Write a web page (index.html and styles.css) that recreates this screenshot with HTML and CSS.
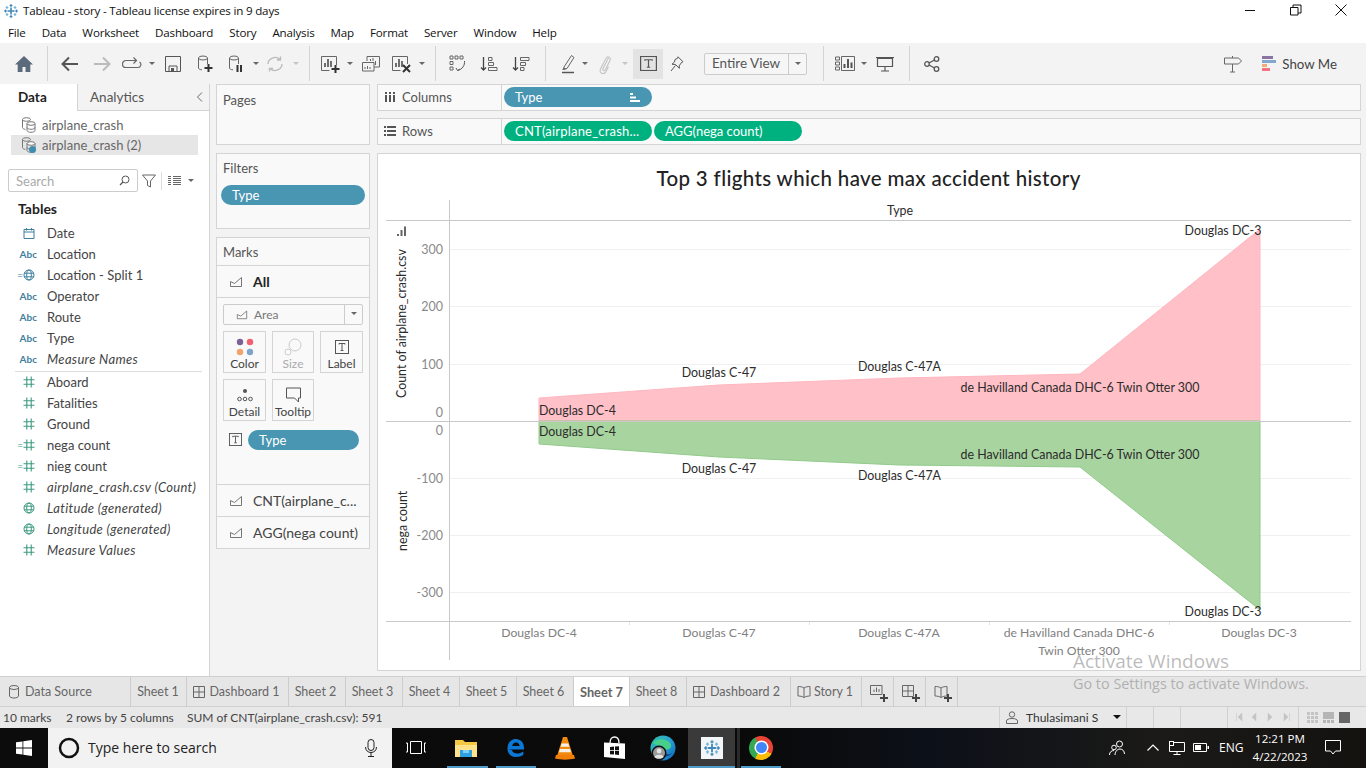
FILE: index.html
```html
<!DOCTYPE html>
<html lang="en">
<head>
<meta charset="utf-8">
<title>Tableau - story</title>
<link rel="stylesheet" href="styles.css">
</head>
<body>
<svg class="defs" width="0" height="0" aria-hidden="true">
  <defs>
    <symbol id="i-logo" viewBox="0 0 16 16">
      <g stroke="#3f88b8" stroke-width="1.2" fill="none">
        <path d="M8 4.500v7M4.500 8h7" stroke-width="1.600"/>
        <path d="M8 1v3M6.600 2.500h2.800M8 12v3M6.600 13.500h2.800M2.500 6.500v3M1 8h3M13.500 6.500v3M12 8h3"/>
        <path d="M4 3v3M2.600 4.500h2.800M12 3v3M10.600 4.500h2.800M4 10v3M2.600 11.500h2.800M12 10v3M10.600 11.500h2.800" stroke="#79b3d3"/>
      </g>
    </symbol>
    <symbol id="i-area" viewBox="0 0 14 14">
      <path d="M1.500 12.500V7.500l4 2 7-6v9z" fill="none" stroke="#777" stroke-width="1"/>
    </symbol>
    <symbol id="i-tbox" viewBox="0 0 14 14">
      <rect x=".5" y=".5" width="13" height="13" fill="none" stroke="#555"/>
      <path d="M4 4.500V3.500h6v1M7 3.500v7M5.600 10.500h2.800" fill="none" stroke="#555"/>
    </symbol>
    <symbol id="i-hash" viewBox="0 0 12 12">
      <path d="M3.800 .5v11M8.200 .5v11M.5 3.800h11M.5 8.200h11" fill="none" stroke="#3d9b80" stroke-width="1.100"/>
    </symbol>
    <symbol id="i-globe" viewBox="0 0 12 12">
      <circle cx="6" cy="6" r="5" fill="none" stroke="currentColor"/>
      <ellipse cx="6" cy="6" rx="2.300" ry="5" fill="none" stroke="currentColor"/>
      <path d="M1 4.200h10M1 7.800h10" stroke="currentColor"/>
    </symbol>
    <symbol id="i-linked" viewBox="0 0 18 18">
      <ellipse cx="6.500" cy="3.500" rx="4" ry="1.800" fill="none" stroke="#777"/>
      <path d="M2.500 3.500v8c0 1 1.500 1.800 3 1.800" fill="none" stroke="#777"/>
      <ellipse cx="11" cy="7.500" rx="4" ry="1.800" fill="#fff" stroke="#777"/>
      <path d="M7 7.500v7c0 1 2 1.800 4 1.800s4-.8 4-1.800v-7M7 11.500c0 1 2 1.800 4 1.800s4-.8 4-1.800" fill="none" stroke="#777"/>
    </symbol>
    <symbol id="i-dash" viewBox="0 0 12 12">
      <path d="M.5 .5h11v11H.500zM6 .5v11M.5 6h11" fill="none" stroke="#666"/>
    </symbol>
    <symbol id="i-story" viewBox="0 0 14 14">
      <path d="M7 3C5.500 1.800 3 1.500 1 1.500v9.500c2 0 4.500.4 6 1.500 1.500-1.100 4-1.500 6-1.500V1.500C11 1.500 8.500 1.800 7 3zM7 3v9.500" fill="none" stroke="#666"/>
    </symbol>
    <symbol id="i-plus" viewBox="0 0 8 8">
      <path d="M4 0v8M0 4h8" stroke="#444" stroke-width="2"/>
    </symbol>
  </defs>
</svg>

<div class="app">
  <header class="titlebar">
    <svg class="title-logo" width="16" height="16"><use href="#i-logo"/></svg>
    <span class="title-text">Tableau - story - Tableau license expires in 9 days</span>
    <div class="winctl">
      <svg width="12" height="12" viewBox="0 0 12 12"><path d="M1 6.500h10" stroke="#111"/></svg>
      <svg width="12" height="12" viewBox="0 0 12 12"><path d="M.5 3.500h7.500v7.500H.500zM3 3.500V1h8v8H8" fill="none" stroke="#111"/></svg>
      <svg width="12" height="12" viewBox="0 0 12 12"><path d="M.5 .5l11 11M11.500 .5l-11 11" stroke="#111"/></svg>
    </div>
  </header>

  <nav class="menubar">
    <span>File</span><span>Data</span><span>Worksheet</span><span>Dashboard</span><span>Story</span><span>Analysis</span><span>Map</span><span>Format</span><span>Server</span><span>Window</span><span>Help</span>
  </nav>

  <div class="toolbar">
    <div class="tb w32"><svg width="20" height="18" viewBox="0 0 20 18"><path d="M10 1L1 9.500h2.700V17h4.800v-5h3v5h4.800V9.500H19z" fill="#5b6b7b"/></svg></div>
    <i class="sep ml7"></i>
    <div class="tb w32 ml6"><svg width="18" height="16" viewBox="0 0 18 16"><path d="M17 8H2M8 1.500L1.500 8 8 14.500" fill="none" stroke="#555" stroke-width="2"/></svg></div>
    <div class="tb w32"><svg width="18" height="16" viewBox="0 0 18 16"><path d="M1 8h15M10 1.500L16.500 8 10 14.500" fill="none" stroke="#bbb" stroke-width="2"/></svg></div>
    <div class="tb w28"><svg width="20" height="14" viewBox="0 0 20 14"><path d="M14 3.500H4a3.200 3.200 0 000 7h12a3 3 0 001.500-5.500M11.500.500l3 3-3 3" fill="none" stroke="#666" stroke-width="1.200"/></svg></div>
    <i class="caret w12"></i>
    <div class="tb w30"><svg width="16" height="16" viewBox="0 0 16 16"><path d="M.5.500h15v15H.500zM4 15.500V10h8v5.500" fill="none" stroke="#555"/><rect x="6" y="12" width="3" height="3" fill="#555"/></svg></div>
    <div class="tb w34"><svg width="16" height="18" viewBox="0 0 16 18"><ellipse cx="6" cy="3" rx="4.500" ry="2" fill="none" stroke="#666"/><path d="M1.500 3v10c0 1 1.500 1.800 3.500 1.800M10.500 3v6" fill="none" stroke="#666"/><path d="M11.500 9v8M7.500 13h8" stroke="#333" stroke-width="2"/></svg></div>
    <div class="tb w28"><svg width="16" height="18" viewBox="0 0 16 18"><ellipse cx="6" cy="3" rx="4.500" ry="2" fill="none" stroke="#666"/><path d="M1.500 3v10c0 1 1.500 1.800 3.500 1.800M10.500 3v6" fill="none" stroke="#666"/><path d="M9.500 10v7M13 10v7" stroke="#333" stroke-width="2"/></svg></div>
    <i class="caret w12"></i>
    <div class="tb w26"><svg width="18" height="16" viewBox="0 0 18 16"><path d="M2 8a7 6.500 0 0112-4.500M16 8A7 6.500 0 014 12.500M14.500.500v3.500H11M3.500 15.500V12.500H7" fill="none" stroke="#bbb" stroke-width="1.300"/></svg></div>
    <i class="caret w16 off"></i>
    <i class="sep ml5"></i>
    <div class="tb w32 ml5"><svg width="20" height="18" viewBox="0 0 20 18"><path d="M15.500 10V1.500H.500v14h8" fill="none" stroke="#666"/><path d="M4 12V8M7 12V4M10 12V6" stroke="#444" stroke-width="1.500"/><path d="M14.500 10v8M10.500 14h8" stroke="#333" stroke-width="2"/></svg></div>
    <i class="caret w6"></i>
    <div class="tb w36"><svg width="18" height="16" viewBox="0 0 18 16"><path d="M5 5V.5h12.500V11H12" fill="none" stroke="#666"/><path d="M.5 6.500H12V15H.500z" fill="#f3f3f3" stroke="#666"/><path d="M8.500 5V3M11 5V2M13.500 9V5M3 13v-2M5.500 13v-3M8 13v-2" stroke="#666"/></svg></div>
    <div class="tb w26"><svg width="20" height="18" viewBox="0 0 20 18"><path d="M15.500 9V1.500H.500v14h8" fill="none" stroke="#666"/><path d="M4 12V8M7 12V4M10 12V6" stroke="#444" stroke-width="1.500"/><path d="M11 10l7 7M18 10l-7 7" stroke="#333" stroke-width="2"/></svg></div>
    <i class="caret w14"></i>
    <i class="sep ml6"></i>
    <div class="tb w32 ml5"><svg width="18" height="18" viewBox="0 0 18 18"><path d="M2 1h3v3H2zM7 1h3v3H7zM12 1h3v3h-3zM2 6.500h3v3H2zM2 12h3v3H2z" fill="none" stroke="#666"/><path d="M16.500 6c.5 4-2 8.500-7 9.500M8 13l1.500 2.500L12 14" fill="none" stroke="#555"/></svg></div>
    <div class="tb w32"><svg width="18" height="16" viewBox="0 0 18 16"><path d="M3.500 1v13M1 11.500L3.500 14 6 11.500" fill="none" stroke="#444" stroke-width="1.300"/><path d="M8.500 1.500H12v3H8.500zM8.500 6.500h5v3h-5zM8.500 11.500H17v3H8.500z" fill="none" stroke="#666"/></svg></div>
    <div class="tb w32"><svg width="18" height="16" viewBox="0 0 18 16"><path d="M3.500 1v13M1 11.500L3.500 14 6 11.500" fill="none" stroke="#444" stroke-width="1.300"/><path d="M8.500 1.500H17v3H8.500zM8.500 6.500h5v3h-5zM8.500 11.500H12v3H8.500z" fill="none" stroke="#666"/></svg></div>
    <i class="sep ml8"></i>
    <div class="tb w28 ml8"><svg width="14" height="20" viewBox="0 0 14 20"><path d="M3 13L10.500 1.500 13 3.500 6 14.500 2.500 15.500z" fill="none" stroke="#666"/><path d="M1 16l2-2.500 2.500 1.500" fill="#666"/><path d="M1 18.500h12" stroke="#555" stroke-width="1.500"/></svg></div>
    <i class="caret w6"></i>
    <div class="tb w32 ml1"><svg width="12" height="20" viewBox="0 0 12 20"><path d="M9.500 4L4 14.500c-1 2 1.500 3 2.500 1L11 6.500c1.500-3-2.500-5-4-2L1.500 15c-2 4 3.500 6.500 5.500 2.500L9.500 12.500" fill="none" stroke="#c4c4c4" stroke-width="1.100"/></svg></div>
    <i class="caret w8 off"></i>
    <div class="tb tbon ml4"><svg width="17" height="15" viewBox="0 0 14 14" preserveAspectRatio="none"><use href="#i-tbox"/></svg></div>
    <div class="tb w28"><svg width="14" height="16" viewBox="0 0 14 16"><path d="M8 .8l5 5-1.300.5-2.500 3.500.2 2.500L5.500 8.500 2 8.200 4.500 6 5 3.500 7.500 2.300zM5.500 9.500L1 15" fill="none" stroke="#555"/></svg></div>
    <div class="fit ml13"><span class="fit-l">Entire View</span><span class="fit-r"><i class="caret w6"></i></span></div>
    <i class="sep ml16"></i>
    <div class="tb w32 ml5"><svg width="20" height="15" viewBox="0 0 20 15"><path d="M.5 1h4v3h-4zM.5 6h4v3h-4zM.5 11h4v3h-4zM6.500.5h13v14h-13z" fill="none" stroke="#666"/><path d="M9.500 12V8M13 12V3M16.500 12V6.500" stroke="#555" stroke-width="2"/></svg></div>
    <i class="caret w6"></i>
    <div class="tb w36"><svg width="18" height="16" viewBox="0 0 18 16"><path d="M1.500 2.500h15v8h-15zM0 1.500h18M9 10.500v4M5 15h8" fill="none" stroke="#555" stroke-width="1.200"/></svg></div>
    <i class="sep ml6"></i>
    <div class="tb w32 ml6"><svg width="16" height="16" viewBox="0 0 16 16"><g fill="none" stroke="#555" stroke-width="1.300"><circle cx="3" cy="8" r="2.300"/><circle cx="12.500" cy="3" r="2.300"/><circle cx="12.500" cy="13" r="2.300"/><path d="M5 7l5.500-3M5 9l5.500 3"/></g></svg></div>
    <div class="tb-spacer"></div>
    <div class="tb w32"><svg width="18" height="18" viewBox="0 0 18 18"><path d="M.5 3h14l3 3-3 3H.500zM8.500 3V1M8.500 9v8M6 17h5" fill="none" stroke="#666"/></svg></div>
    <div class="showme">
      <svg width="14" height="16" viewBox="0 0 14 16"><rect x="0" y="0" width="11" height="3" fill="#8a75a2"/><rect x="0" y="4" width="14" height="3" fill="#82a8d0"/><rect x="0" y="8" width="5" height="3" fill="#f2aa76"/><rect x="0" y="12" width="8" height="3" fill="#f4727f"/></svg>
      <span>Show Me</span>
    </div>
  </div>

  <main class="workspace">
    <aside class="datapane">
      <div class="dp-tabs">
        <div class="dp-tab dp-on">Data</div>
        <div class="dp-tab dp-off">Analytics<svg class="dp-collapse" width="7" height="10" viewBox="0 0 7 10"><path d="M6 .5L1.500 5 6 9.500" fill="none" stroke="#666"/></svg></div>
      </div>
      <div class="ds-row"><svg width="18" height="18"><use href="#i-linked"/></svg><span>airplane_crash</span></div>
      <div class="ds-row ds-sel"><span class="ds-ico"><svg width="18" height="18"><use href="#i-linked"/></svg><i class="ds-check"></i></span><span>airplane_crash (2)</span></div>
      <div class="searchrow">
        <div class="search"><span>Search</span><svg width="11" height="11" viewBox="0 0 11 11"><circle cx="6.500" cy="4.500" r="3.500" fill="none" stroke="#555"/><path d="M4 7L1 10" stroke="#555" stroke-width="1.300"/></svg></div>
        <svg class="funnel" width="14" height="14" viewBox="0 0 14 14"><path d="M.5 1h13L8.500 7v6l-3-1.500V7z" fill="none" stroke="#666"/></svg>
        <i class="vsep"></i>
        <svg class="listic" width="13" height="9" viewBox="0 0 13 9"><path d="M0 .5h3M5 .5h8M0 2.500h3M5 2.500h8M0 4.500h3M5 4.500h8M0 6.500h3M5 6.500h8M0 8.500h3M5 8.500h8" stroke="#666"/></svg>
        <i class="caret w20"></i>
      </div>
      <div class="tables-h">Tables</div>
      <ul class="fields">
        <li><span class="fi"><svg width="12" height="12" viewBox="0 0 12 12"><path d="M1 2.500h10v9H1zM1 5h10M3.500 1v2.500M8.500 1v2.500" fill="none" stroke="#3f7f9c"/></svg></span>Date</li>
        <li><span class="fi abc">Abc</span>Location</li>
        <li><span class="fi"><b class="calc calc-b">=</b><svg class="gl-b" width="12" height="12"><use href="#i-globe"/></svg></span>Location - Split 1</li>
        <li><span class="fi abc">Abc</span>Operator</li>
        <li><span class="fi abc">Abc</span>Route</li>
        <li><span class="fi abc">Abc</span>Type</li>
        <li class="it"><span class="fi abc">Abc</span>Measure Names</li>
        <li class="fsep"></li>
        <li><span class="fi"><svg width="12" height="12"><use href="#i-hash"/></svg></span>Aboard</li>
        <li><span class="fi"><svg width="12" height="12"><use href="#i-hash"/></svg></span>Fatalities</li>
        <li><span class="fi"><svg width="12" height="12"><use href="#i-hash"/></svg></span>Ground</li>
        <li><span class="fi"><b class="calc">=</b><svg width="12" height="12"><use href="#i-hash"/></svg></span>nega count</li>
        <li><span class="fi"><b class="calc">=</b><svg width="12" height="12"><use href="#i-hash"/></svg></span>nieg count</li>
        <li class="it"><span class="fi"><svg width="12" height="12"><use href="#i-hash"/></svg></span>airplane_crash.csv (Count)</li>
        <li class="it"><span class="fi"><svg class="gl-g" width="12" height="12"><use href="#i-globe"/></svg></span>Latitude (generated)</li>
        <li class="it"><span class="fi"><svg class="gl-g" width="12" height="12"><use href="#i-globe"/></svg></span>Longitude (generated)</li>
        <li class="it"><span class="fi"><svg width="12" height="12"><use href="#i-hash"/></svg></span>Measure Values</li>
      </ul>
    </aside>

    <section class="cards">
      <div class="card pages"><div class="card-h">Pages</div></div>
      <div class="card filters"><div class="card-h">Filters</div><div class="pill blue flt">Type</div></div>
      <div class="card marks">
        <div class="card-h marks-h">Marks</div>
        <div class="mrow mrow-all"><svg width="14" height="14"><use href="#i-area"/></svg><b>All</b></div>
        <div class="marks-body">
          <div class="mdrop"><span class="mdrop-l"><svg width="12" height="12"><use href="#i-area"/></svg>Area</span><span class="mdrop-r"><i class="caret w6"></i></span></div>
          <div class="mgrid">
            <div class="mbtn"><svg width="18" height="18" viewBox="0 0 18 18"><circle cx="4" cy="4" r="3.200" fill="#7b6295"/><circle cx="14" cy="4" r="3.200" fill="#f0606e"/><circle cx="4" cy="14" r="3.200" fill="#f2a36d"/><circle cx="14" cy="14" r="3.200" fill="#7ea3cc"/></svg><span>Color</span></div>
            <div class="mbtn off"><svg width="18" height="18" viewBox="0 0 18 18"><circle cx="11" cy="7" r="6" fill="none" stroke="#ccc"/><circle cx="4" cy="14" r="3" fill="#fafafa" stroke="#ccc"/></svg><span>Size</span></div>
            <div class="mbtn"><svg width="14" height="14"><use href="#i-tbox"/></svg><span>Label</span></div>
            <div class="mbtn"><svg width="16" height="14" viewBox="0 0 16 14"><circle cx="8" cy="3" r="2" fill="#555"/><circle cx="2.500" cy="11" r="1.800" fill="none" stroke="#555"/><circle cx="8" cy="11" r="1.800" fill="none" stroke="#555"/><circle cx="13.500" cy="11" r="1.800" fill="none" stroke="#555"/></svg><span>Detail</span></div>
            <div class="mbtn"><svg width="15" height="15" viewBox="0 0 15 15"><path d="M.5.500h14v10h-2v4l-4-4H.500z" fill="none" stroke="#555"/></svg><span>Tooltip</span></div>
          </div>
          <div class="mfield"><svg width="13" height="13"><use href="#i-tbox"/></svg><div class="pill blue mpill">Type</div></div>
        </div>
        <div class="mrow"><svg width="14" height="14"><use href="#i-area"/></svg><span>CNT(airplane_c...</span></div>
        <div class="mrow"><svg width="14" height="14"><use href="#i-area"/></svg><span>AGG(nega count)</span></div>
      </div>
    </section>

    <section class="view">
      <div class="shelf">
        <div class="shelf-l"><svg width="12" height="10" viewBox="0 0 12 10"><path d="M2 0v2M6 0v2M10 0v2M2 3v7M6 3v7M10 3v7" stroke="#555" stroke-width="2"/></svg><span>Columns</span></div>
        <div class="shelf-c">
          <div class="pill blue wide">Type<svg class="sorted" width="11" height="9" viewBox="0 0 11 9"><path d="M1 0v2h3V0zM1 3.500h6v2H1zM1 7h10v2H1z" fill="#fff"/></svg></div>
        </div>
      </div>
      <div class="shelf">
        <div class="shelf-l"><svg width="12" height="10" viewBox="0 0 12 10"><path d="M0 1h2M3 1h9M0 5h2M3 5h9M0 9h2M3 9h9" stroke="#555" stroke-width="2"/></svg><span>Rows</span></div>
        <div class="shelf-c">
          <div class="pill green wide wl">CNT(airplane_crash...</div>
          <div class="pill green wide">AGG(nega count)</div>
        </div>
      </div>
      <div class="chart">
        <svg class="plot" width="982" height="517" viewBox="378 154 982 517">
          <text class="ttl" x="868.500" y="186" text-anchor="middle">Top 3 flights which have max accident history</text>
          <text class="lab" x="900" y="215" text-anchor="middle">Type</text>
          <g class="grid">
            <path d="M450 249.500H1351M450 306.500H1351M450 364.500H1351M450 478.500H1351M450 535.500H1351M450 592.500H1351"/>
          </g>
          <polygon class="pink" points="539,398 719,385 899,378 1080,374 1260,229 1260,421 539,421"/>
          <polygon class="grn" points="539,444 719,457 899,465 1080,467 1260,610 1260,421 539,421"/>
          <g class="axis">
            <path d="M449.500 200V660M386 220.500H1351M386 421.500H1351M386 621.500H1351"/>
            <path class="tick" d="M629.500 622v3M809.500 622v3M989.500 622v3M1169.500 622v3"/>
          </g>
          <g class="ticks">
            <text x="443" y="254">300</text><text x="443" y="311">200</text><text x="443" y="369">100</text><text x="443" y="417">0</text>
            <text x="443" y="435">0</text><text x="443" y="483">-100</text><text x="443" y="540">-200</text><text x="443" y="597">-300</text>
          </g>
          <path class="bars" d="M397 234h2v2h-2zM400.500 230h2v6h-2zM404 226.500h2v9.500h-2z"/>
          <text class="lab" transform="translate(406 398) rotate(-90)">Count of airplane_crash.csv</text>
          <text class="lab" transform="translate(407 551) rotate(-90)">nega count</text>
          <g class="lab">
            <text x="539" y="415">Douglas DC-4</text>
            <text x="539" y="436">Douglas DC-4</text>
            <text x="719" y="377" text-anchor="middle">Douglas C-47</text>
            <text x="719" y="473" text-anchor="middle">Douglas C-47</text>
            <text x="899.500" y="371" text-anchor="middle">Douglas C-47A</text>
            <text x="899.500" y="480" text-anchor="middle">Douglas C-47A</text>
            <text x="1080" y="392" text-anchor="middle">de Havilland Canada DHC-6 Twin Otter 300</text>
            <text x="1080" y="459" text-anchor="middle">de Havilland Canada DHC-6 Twin Otter 300</text>
            <text x="1223" y="235" text-anchor="middle">Douglas DC-3</text>
            <text x="1223" y="616" text-anchor="middle">Douglas DC-3</text>
          </g>
          <g class="xlab">
            <text x="539" y="637">Douglas DC-4</text>
            <text x="719" y="637">Douglas C-47</text>
            <text x="899" y="637">Douglas C-47A</text>
            <text x="1079" y="637">de Havilland Canada DHC-6</text>
            <text x="1079" y="655">Twin Otter 300</text>
            <text x="1259" y="637">Douglas DC-3</text>
          </g>
        </svg>
      </div>
    </section>
  </main>

  <div class="tabs">
    <div class="tab t-ds"><svg width="12" height="14" viewBox="0 0 12 14"><ellipse cx="6" cy="2.500" rx="4.500" ry="2" fill="none" stroke="#666"/><path d="M1.500 2.500v8.500c0 1 2 2 4.500 2s4.500-1 4.500-2V2.500" fill="none" stroke="#666"/></svg>Data Source</div>
    <div class="tab t-s1">Sheet 1</div>
    <div class="tab t-d1"><svg width="12" height="12"><use href="#i-dash"/></svg>Dashboard 1</div>
    <div class="tab t-s">Sheet 2</div>
    <div class="tab t-s">Sheet 3</div>
    <div class="tab t-s">Sheet 4</div>
    <div class="tab t-s">Sheet 5</div>
    <div class="tab t-s">Sheet 6</div>
    <div class="tab t-s t-on">Sheet 7</div>
    <div class="tab t-s">Sheet 8</div>
    <div class="tab t-d2"><svg width="12" height="12"><use href="#i-dash"/></svg>Dashboard 2</div>
    <div class="tab t-st"><svg width="14" height="14"><use href="#i-story"/></svg>Story 1</div>
    <div class="tab t-new"><span class="newi"><svg width="14" height="13" viewBox="0 0 14 13"><path d="M.5.500H12v9H.500zM4 7V4.500M6.500 7V2.500M9 7V4" fill="none" stroke="#666"/></svg><svg class="pl" width="8" height="8"><use href="#i-plus"/></svg></span></div>
    <div class="tab t-new"><span class="newi"><svg width="12" height="12"><use href="#i-dash"/></svg><svg class="pl" width="8" height="8"><use href="#i-plus"/></svg></span></div>
    <div class="tab t-new"><span class="newi"><svg width="14" height="14"><use href="#i-story"/></svg><svg class="pl" width="8" height="8"><use href="#i-plus"/></svg></span></div>
  </div>

  <footer class="status">
    <span class="st1">10 marks</span><span class="st2">2 rows by 5 columns</span><span class="st3">SUM of CNT(airplane_crash.csv): 591</span>
    <div class="st-spacer"></div>
    <div class="st-user"><svg width="12" height="13" viewBox="0 0 12 13"><circle cx="6" cy="3.500" r="2.700" fill="none" stroke="#666"/><path d="M.5 12.500V10c0-1.500 2-2.500 5.500-2.500s5.500 1 5.500 2.500v2.500z" fill="none" stroke="#666"/></svg><span>Thulasimani S</span><i class="caret dk"></i></div>
    <div class="st-box w27"></div>
    <div class="st-box w27"></div>
    <div class="st-box w47"></div>
    <div class="st-box st-nav">
      <svg width="56" height="8" viewBox="0 0 56 8"><path d="M1.500 0v8M7 0L3 4l4 4zM21 0l-4 4 4 4zM33 0l4 4-4 4zM49 0l4 4-4 4zM54.500 0v8" fill="#c4c4c4" stroke="#c4c4c4" stroke-width=".5"/></svg>
    </div>
    <div class="st-box st-view">
      <svg width="11" height="11" viewBox="0 0 11 11"><path d="M0 0h3v3H0zM4 0h3v3H4zM8 0h3v3H8zM0 4h3v3H0zM4 4h3v3H4zM8 4h3v3H8zM0 8h3v3H0zM4 8h3v3H4zM8 8h3v3H8z" fill="#c4c4c4"/></svg>
      <svg width="11" height="11" viewBox="0 0 11 11"><path d="M0 0h11v7H0zM0 8h3v3H0zM4 8h3v3H4zM8 8h3v3H8z" fill="#b5b5b5"/></svg>
      <svg width="11" height="11" viewBox="0 0 11 11"><rect width="11" height="11" fill="#666"/></svg>
    </div>
  </footer>

  <div class="taskbar">
    <div class="start"><svg width="16" height="16" viewBox="0 0 16 16"><path d="M0 2.300l6.500-.9v6.200H0zM7.300 1.300L16 0v7.600H7.300zM0 8.400h6.500v6.200L0 13.700zM7.300 8.400H16V16l-8.700-1.200z" fill="#fff"/></svg></div>
    <div class="tsearch">
      <svg width="22" height="22" viewBox="0 0 22 22"><circle cx="11" cy="11" r="9" fill="none" stroke="#111" stroke-width="2.500"/></svg>
      <span>Type here to search</span>
      <svg class="mic" width="12" height="18" viewBox="0 0 12 18"><rect x="3" y=".5" width="6" height="11" rx="3" fill="none" stroke="#222"/><path d="M.5 8c0 3.500 2.500 5.500 5.500 5.500S11.500 11.500 11.500 8M6 13.500V17M3 17.500h6" fill="none" stroke="#222"/></svg>
    </div>
    <div class="tbtn tb-view"><svg width="20" height="13" viewBox="0 0 20 13"><path d="M4.500.5h11v12h-11zM1.500 2v9M18.500 2v9M0 2h1.500M0 11h1.500M18.500 2H20M18.500 11H20" fill="none" stroke="#fff"/></svg></div>
    <div class="tbtn tb-exp run"><svg width="22" height="19" viewBox="0 0 22 19"><path d="M0 2h8l2 2h12v15H0z" fill="#f5c842"/><path d="M0 7h22v12H0z" fill="#ffe28a"/><path d="M5 12h12v7H5z" fill="#2f9fe0"/><path d="M8 12v3h6v-3z" fill="#7fd0f5"/></svg></div>
    <div class="tbtn tb-edge run"><svg width="20" height="21" viewBox="0 0 20 21"><path d="M2.500 12.500h15.500C18.500 6 15 2 9.800 2 5 2 1.500 6 1.500 11.500c0 5.500 3.700 8.500 8.800 8.500 2.500 0 5-.6 7-1.900v-3.600c-4 2.800-10 3-11.300-1.200zM6.200 9c.4-2 1.800-3.500 3.800-3.500 2 0 3.400 1.300 3.600 3.500z" fill="#0a78d4"/></svg></div>
    <div class="tbtn tb-vlc"><svg width="20" height="24" viewBox="0 0 20 24"><path d="M8 1h4l6 19H2z" fill="#f28a12"/><path d="M6.600 7.500h6.800l1 3.300H5.600zM5 13h10l1 3.200H4z" fill="#f6f0e6"/><path d="M1 19h18l1 3.500c-6 1.500-14 1.500-20 0z" fill="#f07f0a"/></svg></div>
    <div class="tbtn tb-store"><svg width="21" height="24" viewBox="0 0 21 24"><path d="M6 7C6 3 8 1 10.500 1S15 3 15 7" fill="none" stroke="#fff" stroke-width="1.300"/><path d="M0 6.500l21 1V23L0 21z" fill="#fff"/><path d="M6 11l4-.4v3.600H6zM11 10.500l4-.3v4H11zM6 15h4v3.600l-4-.3zM11 15h4v4l-4-.4z" fill="#111"/></svg></div>
    <div class="tbtn tb-new"><svg width="26" height="26" viewBox="0 0 26 26"><defs><linearGradient id="eg" x1="0" y1="0" x2="1" y2="1"><stop offset="0" stop-color="#33c3a0"/><stop offset=".5" stop-color="#2aa0d8"/><stop offset="1" stop-color="#0b62b4"/></linearGradient></defs><circle cx="13" cy="13" r="12.500" fill="url(#eg)"/><path d="M3 8c4-5 13-5 17 0 2 3 1 6-3 6.500-3 .2-4-1-5-2.500-3-2-7-2-9-4z" fill="#46d08a"/><path d="M10 20c3 2.500 9 2 12-2-2 1-4 2-6 1z" fill="#0e3f86"/><circle cx="9" cy="18" r="7.500" fill="#111"/><circle cx="9" cy="18" r="6" fill="#9b9b9b"/><circle cx="9" cy="16" r="2.400" fill="#e2e2e2"/><path d="M4.500 22c1-3 8-3 9 0-2 2-7 2-9 0z" fill="#e2e2e2"/></svg></div>
    <div class="tbtn tb-tab tact run"><span class="tlogo"><svg width="18" height="18"><use href="#i-logo"/></svg></span></div>
    <i class="tdiv"></i>
    <div class="tbtn tb-chrome run"><span class="chrome"></span></div>
    <div class="tspacer"></div>
    <svg class="tray people" width="16" height="16" viewBox="0 0 16 16"><circle cx="10.500" cy="4" r="3" fill="none" stroke="#fff"/><circle cx="5" cy="7.500" r="2.300" fill="none" stroke="#fff"/><path d="M.5 15c0-3 2-4.500 4.500-4.500M6 15c0-3 2-6 5-6 2.500 0 4.500 2 4.500 5" fill="none" stroke="#fff"/></svg>
    <svg class="tray chev" width="12" height="7" viewBox="0 0 12 7"><path d="M.5 6.500L6 1l5.500 5.500" fill="none" stroke="#fff" stroke-width="1.200"/></svg>
    <svg class="tray net" width="16" height="14" viewBox="0 0 16 14"><path d="M.5 1.500h15v9h-15zM8 10.500v3M4.500 13.500h7" fill="none" stroke="#fff"/><rect x=".5" y=".5" width="4" height="4" fill="#111" stroke="#fff"/></svg>
    <svg class="tray batt" width="16" height="9" viewBox="0 0 16 9"><path d="M.5.500h13v8H.500z" fill="none" stroke="#fff"/><rect x="2" y="2" width="6" height="5" fill="#fff"/><rect x="14.500" y="3" width="1.500" height="3" fill="#fff"/></svg>
    <span class="lang">ENG</span>
    <div class="clock"><span>12:21 PM</span><span>4/22/2023</span></div>
    <svg class="notif" width="16" height="15" viewBox="0 0 16 15"><path d="M.5.500h15v10.500h-5l-2.500 3-2.500-3h-5z" fill="none" stroke="#fff"/></svg>
  </div>

  <div class="watermark"><div class="wm1">Activate Windows</div><div class="wm2">Go to Settings to activate Windows.</div></div>
</div>
</body>
</html>
```

FILE: styles.css
```css
* { box-sizing: border-box; }
html, body { margin: 0; padding: 0; }
body { width: 1366px; height: 768px; overflow: hidden; font-family: "Lato", "Noto Sans", sans-serif; font-size: 13px; color: #444; background: #fff; }
.defs { position: absolute; }
i { font-style: normal; display: block; }
svg { display: block; flex: none; }
.app { position: relative; width: 1366px; height: 768px; display: flex; flex-direction: column; }

.titlebar { height: 22px; display: flex; align-items: center; padding-left: 3px; font-family: "Open Sans", sans-serif; font-size: 11.600px; letter-spacing: -.18px; color: #111; }
.title-text { margin-left: 4px; }
.title-logo { margin-top: 1px; }
.winctl { margin-left: auto; display: flex; padding-right: 19px; gap: 33.500px; margin-top: -2px; }

.menubar { height: 21px; display: flex; align-items: center; padding-left: 8px; gap: 16px; font-family: "Open Sans", sans-serif; font-size: 11.600px; letter-spacing: -.18px; color: #111; }

.toolbar { height: 41px; background: #f3f3f3; display: flex; align-items: center; padding: 1px 29px 0 8px; }
.tb { display: flex; align-items: center; justify-content: center; height: 30px; flex: none; }
.tb-spacer { flex: 1; }
.w32 { width: 32px; } .w28 { width: 28px; } .w30 { width: 30px; } .w34 { width: 34px; } .w26 { width: 26px; } .w36 { width: 36px; }
.sep { width: 1px; height: 35px; background: #d4d4d4; flex: none; }
.ml1 { margin-left: 1px; } .ml4 { margin-left: 4px; } .ml5 { margin-left: 5px; } .ml6 { margin-left: 6px; } .ml7 { margin-left: 7px; } .ml8 { margin-left: 8px; } .ml13 { margin-left: 13px; } .ml16 { margin-left: 16px; }
.caret { position: relative; height: 8px; flex: none; }
.caret::after { content: ""; position: absolute; left: 50%; top: 2px; margin-left: -3px; border-left: 3px solid transparent; border-right: 3px solid transparent; border-top: 3px solid #666; }
.caret.off::after { border-top-color: #c4c4c4; }
.caret.w6 { width: 6px; } .caret.w8 { width: 8px; } .caret.w12 { width: 12px; } .caret.w14 { width: 14px; } .caret.w16 { width: 16px; } .caret.w20 { width: 20px; }
.tbon { width: 30px; height: 30px; background: #e3e3e3; }
.fit { width: 103px; height: 22px; border: 1px solid #ccc; border-radius: 2px; display: flex; background: #f6f6f6; font-size: 13.500px; color: #555; flex: none; }
.fit-l { flex: 1; padding-left: 7px; line-height: 19px; }
.fit-r { width: 18px; border-left: 1px solid #ccc; display: flex; align-items: center; justify-content: center; }
.showme { display: flex; align-items: center; gap: 6px; margin-left: 13px; font-size: 13.300px; color: #444; }

.workspace { height: 593px; display: flex; background: #f3f3f3; }
.datapane { width: 210px; background: #fff; border-right: 1px solid #d4d4d4; flex: none; }
.dp-tabs { display: flex; height: 27px; background: #f3f3f3; }
.dp-tab { font-size: 13.500px; line-height: 27px; }
.dp-on { width: 77px; padding-left: 18px; font-weight: 700; color: #222; background: #fff; }
.dp-off { flex: 1; padding-left: 12px; color: #555; border-left: 1px solid #d4d4d4; border-bottom: 1px solid #d4d4d4; position: relative; }
.dp-collapse { position: absolute; right: 6px; top: 8px; }
.ds-row { height: 20px; margin: 4px 11px 0; display: flex; align-items: center; gap: 4px; padding-left: 9px; color: #666; font-size: 13px; }
.ds-row + .ds-sel { margin-top: 0; background: #e6e6e6; width: 187px; }
.ds-ico { position: relative; }
.ds-check { position: absolute; right: 2px; bottom: 1px; width: 7px; height: 7px; border-radius: 50%; background: #3f8eb0; }
.searchrow { display: flex; align-items: center; height: 24px; margin: 14px 0 0 8px; }
.search { width: 130px; height: 23px; border: 1px solid #ccc; border-radius: 2px; display: flex; align-items: center; justify-content: space-between; padding: 0 7px; color: #aaa; }
.funnel { margin-left: 4px; }
.vsep { width: 1px; height: 18px; background: #ddd; margin-left: 5px; }
.listic { margin-left: 6px; }
.tables-h { font-weight: 700; font-size: 14px; color: #222; margin: 4px 0 0 18px; line-height: 23px; }
.fields { list-style: none; margin: 3px 0 0; padding: 0; }
.fields li { height: 21px; display: flex; align-items: center; color: #444; font-size: 13px; }
.fields .it { font-style: italic; letter-spacing: .33px; }
.fields .fsep { height: 1px; margin: 1px 7px 0 15px; background: #ddd; }
.fi { width: 47px; flex: none; display: flex; align-items: center; justify-content: flex-end; padding-right: 12px; position: relative; }
.fi.abc { font-size: 10px; font-weight: 700; color: #3f7f9c; padding-right: 10px; font-style: normal; letter-spacing: 0; }
.calc { position: absolute; right: 24px; top: 50%; margin-top: -7px; font-size: 10px; line-height: 14px; color: #3d9b80; font-weight: 400; }
.calc-b { color: #3f7f9c; }
.gl-b { color: #3f7f9c; }
.gl-g { color: #3d9b80; }

.cards { width: 167px; padding: 0 7px 0 6px; flex: none; display: flex; flex-direction: column; gap: 8px; }
.card { background: #f9f9f9; border: 1px solid #d4d4d4; }
.card-h { font-size: 13px; color: #555; padding: 6px 0 0 6px; line-height: 16px; }
.pages .card-h { padding-top: 7px; }
.pages { height: 61px; }
.filters { height: 76px; }
.flt { margin: 9px 4px 0; }
.marks { height: 312px; display: flex; flex-direction: column; }
.marks-h { height: 28px; border-bottom: 1px solid #d4d4d4; flex: none; }
.mrow { height: 32px; flex: none; display: flex; align-items: center; gap: 10px; padding-left: 12px; font-size: 14px; color: #444; border-top: 1px solid #d4d4d4; }
.mrow-all { border-top: 0; border-bottom: 1px solid #d4d4d4; }
.mrow b { color: #222; }
.marks-body { flex: 1; padding: 6px 6px 0; }
.mdrop { height: 21px; width: 140px; border: 1px solid #ccc; border-radius: 2px; display: flex; color: #777; font-size: 12px; }
.mdrop-l { flex: 1; display: flex; align-items: center; gap: 6px; padding-left: 12px; }
.mdrop-r { width: 18px; border-left: 1px solid #ccc; display: flex; align-items: center; justify-content: center; }
.mgrid { display: grid; grid-template-columns: 43px 42px 43px; column-gap: 6px; row-gap: 6px; margin-top: 6px; }
.mbtn { height: 42px; border: 1px solid #d4d4d4; display: flex; flex-direction: column; align-items: center; justify-content: flex-start; padding-top: 6px; font-size: 12px; color: #444; }
.mbtn svg { height: 18px; }
.mbtn span { margin-top: 1px; line-height: 14px; }
.mbtn.off { color: #aaa; }
.mfield { display: flex; align-items: center; margin: 9px 0 0 6px; gap: 6px; }
.pill { height: 20px; border-radius: 10px; color: #fff; font-size: 13px; line-height: 20px; padding-left: 11px; flex: none; position: relative; }
.blue { background: #4996b2; }
.green { background: #00b180; }
.mpill { width: 111px; }
.wide { width: 148px; }
.wl { letter-spacing: .2px; }
.sorted { position: absolute; right: 12px; top: 6px; }

.view { flex: 1; display: flex; flex-direction: column; padding-right: 6px; gap: 7px; }
.shelf { height: 27px; flex: none; background: #f9f9f9; border: 1px solid #d4d4d4; display: flex; }
.shelf-l { width: 124px; border-right: 1px solid #d4d4d4; display: flex; align-items: center; gap: 6px; padding-left: 6px; color: #555; font-size: 13px; flex: none; }
.shelf-c { display: flex; align-items: center; gap: 2px; padding-left: 2px; }
.chart { height: 518px; margin-top: 1px; background: #fff; border: 1px solid #d4d4d4; overflow: hidden; }
.plot { font-family: "Lato", "Noto Sans", sans-serif; }
.ttl { font-size: 20.500px; font-weight: 500; fill: #222; letter-spacing: .35px; }
.lab { font-size: 12.400px; fill: #2b2b2b; }
.grid path { stroke: #f0f0f0; fill: none; }
.axis path { stroke: #c8c8c8; fill: none; }
.axis .tick { stroke: #e2e2e2; }
.ticks text { font-size: 12.500px; fill: #8a8a8a; text-anchor: end; }
.bars { fill: #666; }
.xlab text { font-size: 12.200px; fill: #808080; text-anchor: middle; }
.pink { fill: #ffc0c7; stroke: #ffb7c0; stroke-width: 1; }
.grn { fill: #a8d4a0; stroke: #92ca8b; stroke-width: 1; }

.tabs { height: 31px; display: flex; background: #e6e6e6; border-top: 1px solid #d0d0d0; border-bottom: 1px solid #d0d0d0; }
.tab { display: flex; align-items: center; justify-content: center; gap: 5px; border-right: 1px solid #ccc; color: #666; font-size: 12.500px; flex: none; }
.t-ds { width: 131px; justify-content: flex-start; padding-left: 8px; }
.t-s1 { width: 56px; padding-right: 1px; }
.t-d1 { width: 102px; padding-right: 3px; }
.t-s { width: 57px; padding-right: 3px; }
.t-on { background: #fff; font-weight: 700; width: 56px; font-size: 12.800px; padding-right: 0; }
.t-d2 { width: 104px; padding-right: 4px; }
.t-st { width: 71px; gap: 3px; padding-right: 2px; }
.t-new { width: 32px; }
.newi { position: relative; display: block; width: 15px; height: 14px; }
.newi .pl { position: absolute; right: -3px; bottom: -3px; }

.status { height: 21px; background: #e8e8e8; display: flex; align-items: center; font-size: 12px; color: #444; white-space: nowrap; }
.st1 { margin-left: 3px; width: 63px; }
.st2 { width: 121px; }
.st-spacer { flex: 1; }
.st-user { width: 127px; height: 21px; border-left: 1px solid #d0d0d0; display: flex; align-items: center; padding-left: 6px; gap: 8px; color: #333; }
.caret.dk { width: 8px; margin-left: 7px; }
.caret.dk::after { border-left-width: 4px; border-right-width: 4px; border-top: 4px solid #111; margin-left: -4px; }
.st-box { height: 21px; border-left: 1px solid #d0d0d0; }
.w27 { width: 27px; } .w47 { width: 47px; }
.st-nav { width: 71px; display: flex; align-items: center; justify-content: center; }
.st-view { width: 68px; display: flex; align-items: center; gap: 5px; padding-left: 8px; }

.taskbar { height: 40px; display: flex; align-items: center; background: linear-gradient(90deg, #0c0c0c 0%, #0a0a0a 55%, #0c1018 68%, #1b1a18 85%, #14120f 100%); color: #fff; }
.start { width: 48px; height: 40px; display: flex; align-items: center; justify-content: center; background: #0c0c0c; }
.tsearch { width: 344px; height: 40px; background: #f2f2f2; display: flex; align-items: center; padding-left: 10px; gap: 8px; color: #222; font-family: "Open Sans", sans-serif; font-size: 14px; }
.mic { margin-left: auto; margin-right: 15px; }
.tbtn { height: 40px; display: flex; align-items: center; justify-content: center; position: relative; flex: none; }
.tb-view { width: 46px; margin-left: 1px; }
.tb-exp { width: 54px; }
.tb-edge { width: 46px; }
.tb-vlc { width: 52px; }
.tb-store { width: 46px; }
.tb-new { width: 51px; }
.tb-tab { width: 47px; }
.tb-chrome { width: 40px; margin-left: 1px; }
.run::after { content: ""; position: absolute; left: 3px; right: 3px; bottom: 0; height: 2px; background: #4e9cc9; }
.tb-exp.run::after { left: 8px; right: 5px; }
.tact { background: #3a3a3a; }
.tact.run::after, .tb-chrome.run::after { left: 0; right: 0; }
.tlogo { width: 22px; height: 22px; background: #f2f6f9; display: flex; align-items: center; justify-content: center; }
.tdiv { width: 3px; height: 40px; background: #2a2a2a; margin-left: 2px; }
.chrome { display: block; width: 24px; height: 24px; border-radius: 50%; position: relative; background: conic-gradient(#ea4335 0 120deg, #fbbc05 120deg 210deg, #34a853 210deg 330deg, #ea4335 330deg 360deg); }
.chrome::after { content: ""; position: absolute; left: 6.500px; top: 6.500px; width: 11px; height: 11px; border-radius: 50%; background: #4285f4; box-shadow: 0 0 0 1.500px #fff; }
.tspacer { flex: 1; }
.people { margin-right: 22px; }
.chev { margin-right: 10px; }
.net { margin-right: 8px; }
.batt { margin-right: 10px; }
.lang { font-family: "Open Sans", sans-serif; font-size: 12px; width: 26px; white-space: nowrap; }
.clock { width: 62px; margin-left: 4px; display: flex; flex-direction: column; align-items: center; font-family: "Open Sans", sans-serif; font-size: 11.600px; line-height: 18px; }
.notif { margin: 0 25px 0 14px; }

.watermark { position: absolute; left: 1073px; top: 648px; font-family: "Open Sans", sans-serif; color: rgba(120, 120, 120, .5); pointer-events: none; }
.wm1 { font-size: 19px; line-height: 26px; }
.wm2 { font-size: 14.400px; line-height: 20px; }
```
